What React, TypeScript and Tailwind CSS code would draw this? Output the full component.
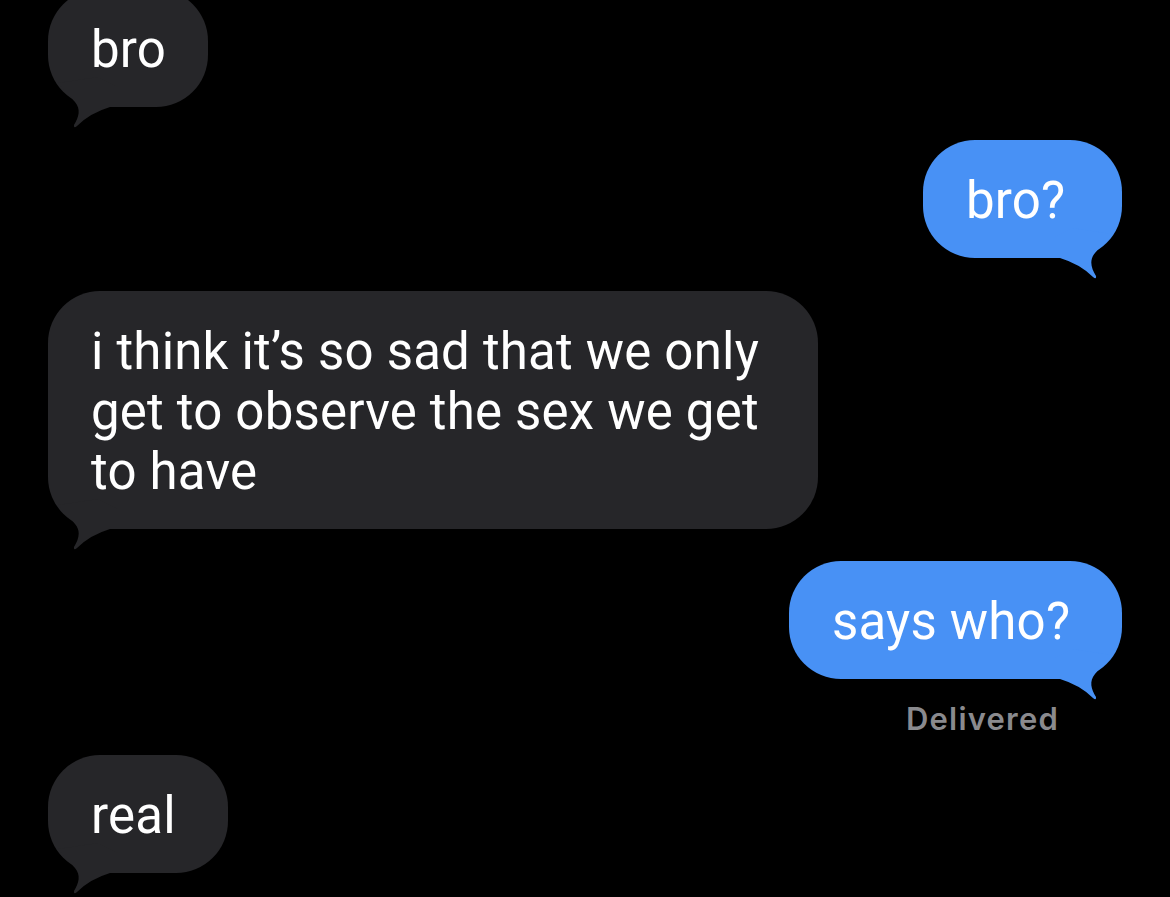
import React from "react";

function Tail({ side, color }: { side: "left" | "right"; color: string }) {
  return (
    <svg
      width="80"
      height="44"
      viewBox="0 0 80 44"
      overflow="visible"
      className={
        side === "right"
          ? "absolute right-0 bottom-[-24px] overflow-visible"
          : "absolute left-0 bottom-[-24px] -scale-x-100 overflow-visible"
      }
    >
      <path
        d="M 10 20 L 18 20 Q 38 26, 51 39 Q 54.5 42, 54 38 C 49 30, 47 22, 53 15 C 57 10, 62 6, 70 -4 L 30 -10 L 10 0 Z"
        fill={color}
      />
    </svg>
  );
}

function Bubble({
  side,
  width,
  children,
}: {
  side: "left" | "right";
  width: string;
  children: React.ReactNode;
}) {
  const color = side === "right" ? "#4891f5" : "#262629";
  return (
    <div
      className={
        "relative rounded-[52px] pt-[31px] pb-[27px] pl-[43px] " +
        (side === "right" ? "bg-[#4891f5] self-end " : "bg-[#262629] self-start ") +
        width
      }
    >
      <Tail side={side} color={color} />
      <div className="relative text-[51px] leading-[60px] tracking-[0.2px] text-white whitespace-nowrap">
        {children}
      </div>
    </div>
  );
}

export default function App() {
  return (
    <div
      className="w-[1170px] h-[897px] overflow-hidden bg-black flex flex-col px-[48px]"
      style={{ fontFamily: "Roboto, 'Noto Sans', sans-serif" }}
    >
      <div className="mt-[-11px] flex flex-col">
        <Bubble side="left" width="w-[160px]">bro</Bubble>
        <div className="mt-[33px] flex flex-col">
          <Bubble side="right" width="w-[199px]">bro?</Bubble>
        </div>
        <div className="mt-[33px] flex flex-col">
          <Bubble side="left" width="w-[770px]">
            i think it’s so sad that we only
            <br />
            get to observe the sex we get
            <br />
            to have
          </Bubble>
        </div>
        <div className="mt-[32px] flex flex-col">
          <Bubble side="right" width="w-[333px]">says who?</Bubble>
        </div>
        <div
          className="mt-[22px] self-end mr-[63px] text-[31px] leading-[36px] tracking-[1.2px] font-semibold text-[#8a8a8e]"
          style={{ fontFamily: "Inter, Roboto, sans-serif" }}
        >
          Delivered
        </div>
        <div className="mt-[18px] flex flex-col">
          <Bubble side="left" width="w-[180px]">real</Bubble>
        </div>
      </div>
    </div>
  );
}
